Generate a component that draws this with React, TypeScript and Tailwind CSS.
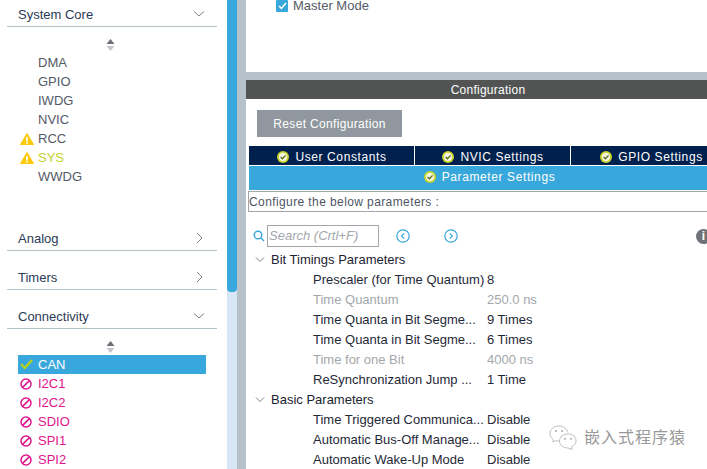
import React from "react";

const font = "font-['Liberation_Sans','Noto_Sans_CJK_SC',sans-serif]";

const Chevron = ({ open }: { open: boolean }) => (
  <svg width="10" height="12" viewBox="0 0 10 12" fill="none" stroke="#7a8288" strokeWidth="1" className="mb-[2px]">
    {open ? <path d="M0 3.5 L5 8 L10 3.5" /> : <path d="M3 1 L8 6 L3 11" />}
  </svg>
);

const SortArrows = () => (
  <svg width="9" height="12" viewBox="0 0 9 12">
    <path d="M4.5 0 L8.5 5 L0.5 5 Z" fill="#6b6f73" />
    <path d="M4.5 12 L8.5 7 L0.5 7 Z" fill="#c4c7ca" />
  </svg>
);

const Warn = () => (
  <svg width="14" height="12" viewBox="0 0 14 12">
    <path d="M7 0.5 L13.5 11.5 L0.5 11.5 Z" fill="#fdc90a" stroke="#fdc90a" strokeLinejoin="round" />
    <rect x="6.2" y="4" width="1.6" height="4.4" fill="#fff" />
    <rect x="6.2" y="9" width="1.6" height="1.6" fill="#fff" />
  </svg>
);

const Ban = () => (
  <svg width="12" height="12" viewBox="0 0 12 12" fill="none" stroke="#e0148c" strokeWidth="1.5">
    <circle cx="6" cy="6" r="5" />
    <path d="M2.6 9.4 L9.4 2.6" />
  </svg>
);

const Tick = () => (
  <svg width="13" height="11" viewBox="0 0 13 11" fill="none" stroke="#b5cf1f" strokeWidth="2.4">
    <path d="M1 5 L4.8 9 L12 1" />
  </svg>
);

const TabCheck = () => (
  <svg width="12" height="12" viewBox="0 0 12 12" className="shrink-0">
    <circle cx="6" cy="6" r="6" fill="#c9d32c" />
    <circle cx="6" cy="6" r="4.2" fill="#f4f6e0" />
    <path d="M3.6 6 L5.4 7.8 L8.6 4.4" fill="none" stroke="#5c6a1a" strokeWidth="1.3" />
  </svg>
);

const CircleArrow = ({ left }: { left?: boolean }) => (
  <svg width="14" height="14" viewBox="0 0 14 14" fill="none" stroke="#38a8dc" strokeWidth="1.2">
    <circle cx="7" cy="7" r="6.2" />
    <path d={left ? "M8.2 4.4 L5.6 7 L8.2 9.6" : "M5.8 4.4 L8.4 7 L5.8 9.6"} />
  </svg>
);

const Section = ({ title, open, cls }: { title: string; open: boolean; cls: string }) => (
  <div className={`mx-[7px] flex h-[21px] w-[210px] items-center justify-between border-b border-[#b6c2c9] pb-[2px] pl-[11px] pr-[13px] ${cls}`}>
    <span className="text-[13px] text-[#2b3a55]">{title}</span>
    <Chevron open={open} />
  </div>
);

const SideItem = ({ icon, label, color, active }: { icon?: React.ReactNode; label: string; color: string; active?: boolean }) => (
  <div className={`ml-[18px] flex h-[19px] w-[188px] items-center ${active ? "bg-[#38a8dc]" : ""}`}>
    <span className="flex w-[20px] justify-start pl-[2px]">{icon}</span>
    <span className={`text-[13px] ${color}`}>{label}</span>
  </div>
);

const Tab = ({ label, width }: { label: string; width: string }) => (
  <div className={`flex h-[19px] shrink-0 items-center justify-center gap-[6px] bg-[#00204e] pl-[1px] pt-[2px] text-[12px] tracking-[0.6px] text-white ${width}`}>
    <TabCheck />
    {label}
  </div>
);

const Group = ({ label }: { label: string }) => (
  <div className="flex h-[20px] items-center text-[13px] text-[#1c2330]">
    <svg width="10" height="6" viewBox="0 0 10 6" fill="none" stroke="#7a8288" className="ml-[9px] mr-[6px]">
      <path d="M1 0.5 L5 4.5 L9 0.5" />
    </svg>
    {label}
  </div>
);

const Param = ({ name, value, off }: { name: string; value: string; off?: boolean }) => (
  <div className={`flex h-[20px] items-center text-[13px] ${off ? "text-[#a3a7ab]" : "text-[#1f2937]"}`}>
    <span className="w-[241px] shrink-0 whitespace-nowrap pl-[67px]">{name}</span>
    <span>{value}</span>
  </div>
);

export default function App() {
  return (
    <div className={`relative flex h-[469px] w-[707px] overflow-hidden bg-white ${font}`}>
      {/* left tree */}
      <div className="w-[227px] shrink-0 overflow-hidden pt-[6px]">
        <Section title="System Core" open cls="" />
        <div className="mt-[12px] flex justify-center pr-[6px]"><SortArrows /></div>
        <div className="mt-[2px]">
          <SideItem label="DMA" color="text-[#545a66]" />
          <SideItem label="GPIO" color="text-[#545a66]" />
          <SideItem label="IWDG" color="text-[#545a66]" />
          <SideItem label="NVIC" color="text-[#545a66]" />
          <SideItem label="RCC" color="text-[#545a66]" icon={<Warn />} />
          <SideItem label="SYS" color="text-[#c3d32a]" icon={<Warn />} />
          <SideItem label="WWDG" color="text-[#545a66]" />
        </div>
        <Section title="Analog" open={false} cls="mt-[44px]" />
        <Section title="Timers" open={false} cls="mt-[18px]" />
        <Section title="Connectivity" open cls="mt-[18px]" />
        <div className="mt-[12px] flex justify-center pr-[6px]"><SortArrows /></div>
        <div className="mt-[2px]">
          <SideItem label="CAN" color="text-white" icon={<Tick />} active />
          <SideItem label="I2C1" color="text-[#e0148c]" icon={<Ban />} />
          <SideItem label="I2C2" color="text-[#e0148c]" icon={<Ban />} />
          <SideItem label="SDIO" color="text-[#e0148c]" icon={<Ban />} />
          <SideItem label="SPI1" color="text-[#e0148c]" icon={<Ban />} />
          <SideItem label="SPI2" color="text-[#e0148c]" icon={<Ban />} />
        </div>
      </div>

      {/* scrollbar */}
      <div className="w-[10px] shrink-0 bg-[#d7e7f5]">
        <div className="h-[292px] rounded-b-[4px] bg-[#38a8dc]" />
      </div>
      <div className="w-[9px] shrink-0 bg-[#b6c2c9]" />

      {/* right panel runs past the window edge */}
      <div className="flex w-[484px] shrink-0 flex-col">
        <div className="h-[72px] shrink-0 pl-[30px]">
          <div className="flex h-[11px] items-end gap-[5px] text-[13px] text-[#545a66]">
            <span className="mb-[-1px] flex h-[12px] w-[12px] items-center justify-center rounded-[1px] bg-[#38a8dc]">
              <svg width="9" height="8" viewBox="0 0 9 8" fill="none" stroke="#fff" strokeWidth="1.6"><path d="M1 4 L3.4 6.4 L8 1" /></svg>
            </span>
            <span className="mb-[1px] leading-[9px]">Master Mode</span>
          </div>
        </div>
        <div className="h-[8px] shrink-0 bg-[#b6c2c9]" />
        <div className="flex h-[19px] shrink-0 items-center justify-center bg-[#525453] text-[12px] tracking-[0.25px] text-white">Configuration</div>

        <div className="ml-[11px] mt-[11px] flex h-[27px] w-[145px] shrink-0 items-center justify-center bg-[#90979e] text-[12px] tracking-[0.33px] text-white">Reset Configuration</div>

        <div className="ml-[3px] mt-[9px] flex shrink-0 gap-[1px]">
          <Tab label="User Constants" width="w-[165px]" />
          <Tab label="NVIC Settings" width="w-[155px]" />
          <Tab label="GPIO Settings" width="w-[160px]" />
        </div>
        <div className="ml-[3px] mt-[1px] flex h-[24px] shrink-0 items-center justify-center gap-[6px] bg-[#38a8dc] pb-[3px] text-[12px] tracking-[0.6px] text-white">
          <TabCheck />
          Parameter Settings
        </div>
        <div className="ml-[2px] mt-[1px] flex h-[21px] w-[480px] shrink-0 items-center border border-[#a3a7ab] text-[12px] tracking-[0.4px] text-[#4f5566]">
          Configure the below parameters :
        </div>

        <div className="mt-[13px] flex h-[22px] shrink-0 items-center">
          <svg width="12" height="12" viewBox="0 0 12 12" fill="none" stroke="#38a8dc" strokeWidth="1.4" className="ml-[7px]">
            <circle cx="5" cy="5" r="3.8" />
            <path d="M8 8 L11 11" />
          </svg>
          <div className="ml-[2px] flex h-[22px] w-[112px] items-center border border-[#a3a7ab] pl-[1px] text-[13px] italic text-[#a3a7ab]">Search (Crtl+F)</div>
          <span className="ml-[17px] flex"><CircleArrow left /></span>
          <span className="ml-[34px] flex"><CircleArrow /></span>
          <span className="ml-[238px] flex h-[15px] w-[15px] shrink-0 items-center justify-center rounded-full bg-[#6f7276] text-[12px] font-bold text-white">i</span>
        </div>

        <div className="mt-[3px]">
          <Group label="Bit Timings Parameters" />
          <Param name="Prescaler (for Time Quantum)" value="8" />
          <Param name="Time Quantum" value="250.0 ns" off />
          <Param name="Time Quanta in Bit Segme..." value="9 Times" />
          <Param name="Time Quanta in Bit Segme..." value="6 Times" />
          <Param name="Time for one Bit" value="4000 ns" off />
          <Param name="ReSynchronization Jump ..." value="1 Time" />
          <Group label="Basic Parameters" />
          <Param name="Time Triggered Communica..." value="Disable" />
          <Param name="Automatic Bus-Off Manage..." value="Disable" />
          <Param name="Automatic Wake-Up Mode" value="Disable" />
        </div>
      </div>

      {/* watermark */}
      <div className="absolute left-[549px] top-[425px] flex items-center gap-[7px] text-[16px] tracking-[1px] text-[#999999]">
        <svg width="28" height="25" viewBox="0 0 28 25" fill="none" stroke="#b8b8b8" strokeWidth="0.9">
          <path d="M10 1 C4.5 1 1 4.5 1 8.5 C1 11 2.2 13 4.5 14.5 L3.8 17 L6.8 15.6 C8 16 9 16.1 10 16.1" />
          <path d="M10 1 C15 1 18 4 18.8 7.5" />
          <path d="M19 9 C14 9 10.5 12 10.5 16 C10.5 20 14 23 19 23 L23 24.5 L22.6 21.8 C25.4 20.4 27 18.4 27 16 C27 12 24 9 19 9 Z" />
          <circle cx="7" cy="6" r="1" fill="#a8a8a8" stroke="none" />
          <circle cx="13" cy="6" r="1" fill="#a8a8a8" stroke="none" />
          <circle cx="16" cy="14" r="0.9" fill="#a8a8a8" stroke="none" />
          <circle cx="22" cy="14" r="0.9" fill="#a8a8a8" stroke="none" />
        </svg>
        嵌入式程序猿
      </div>
    </div>
  );
}
